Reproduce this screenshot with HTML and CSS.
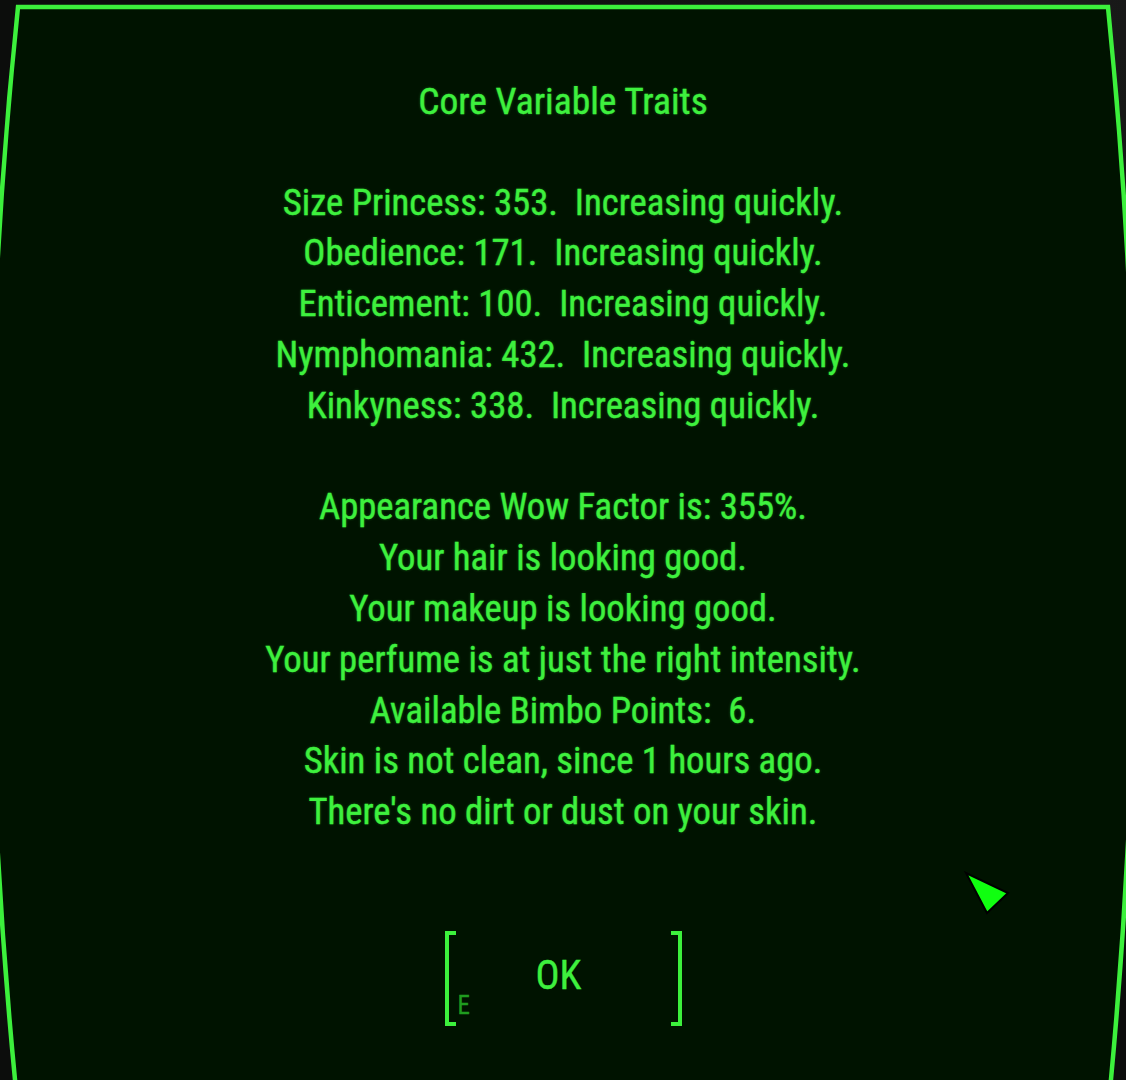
FILE: index.html
```html
<!DOCTYPE html>
<html lang="en">
<head>
<meta charset="utf-8">
<title>Core Variable Traits</title>
<link rel="stylesheet" href="styles.css">
</head>
<body>
<div class="screen">
  <svg class="frame" width="1126" height="1080" viewBox="0 0 1126 1080" aria-hidden="true">
    <path d="M18,7 L1108,7 Q1162,540 1110,1090 L16,1090 Q-38,540 18,7 Z" fill="#001300" stroke="#3cf03c" stroke-width="4.5" stroke-linejoin="miter"/>
  </svg>
  <main class="content">
    <div class="message">
      <p class="line title">Core Variable Traits</p>
      <p class="line blank">&nbsp;</p>
      <p class="line">Size Princess: 353.&nbsp; Increasing quickly.</p>
      <p class="line">Obedience: 171.&nbsp; Increasing quickly.</p>
      <p class="line">Enticement: 100.&nbsp; Increasing quickly.</p>
      <p class="line">Nymphomania: 432.&nbsp; Increasing quickly.</p>
      <p class="line">Kinkyness: 338.&nbsp; Increasing quickly.</p>
      <p class="line blank">&nbsp;</p>
      <p class="line">Appearance Wow Factor is: 355%.</p>
      <p class="line">Your hair is looking good.</p>
      <p class="line">Your makeup is looking good.</p>
      <p class="line">Your perfume is at just the right intensity.</p>
      <p class="line">Available Bimbo Points:&nbsp; 6.</p>
      <p class="line">Skin is not clean, since 1 hours ago.</p>
      <p class="line">There's no dirt or dust on your skin.</p>
    </div>
    <button class="ok-btn" type="button">
      <span class="ok-label">OK</span>
      <span class="ok-key">E</span>
    </button>
  </main>
  <svg class="cursor" width="50" height="48" viewBox="0 0 50 48" aria-hidden="true">
    <polygon points="4,3 46,23 25,43" fill="#10ff10" stroke="#000" stroke-width="2" stroke-linejoin="miter"/>
  </svg>
</div>
</body>
</html>
```

FILE: styles.css
```css
html, body {
  margin: 0;
  padding: 0;
}

body {
  background: #0c0d0c;
  width: 1126px;
  height: 1080px;
  overflow: hidden;
}

.screen {
  position: relative;
  width: 1126px;
  height: 1080px;
  overflow: hidden;
  background: radial-gradient(ellipse at 90% 0%, #1b1c1b 0%, #0c0d0c 40%);
}

.frame {
  position: absolute;
  left: 0;
  top: 0;
}

.content {
  position: relative;
  display: flex;
  flex-direction: column;
  align-items: center;
  padding-top: 76px;
  font-family: "Roboto Condensed", "Roboto", "Liberation Sans", sans-serif;
  font-stretch: condensed;
  color: #3ef03e;
  -webkit-text-stroke: 0.35px #3ef03e;
  text-shadow: 0 0 3px rgba(60, 240, 60, 0.35);
}

.message {
  text-align: center;
  font-size: 36.7px;
  line-height: 50.8px;
}

.line {
  margin: 0;
  white-space: pre;
}

.title {
  font-size: 37.5px;
}

.ok-btn {
  position: relative;
  margin-top: 93px;
  width: 237px;
  height: 95px;
  padding: 0 9px 4px 0;
  border: 0;
  background: transparent;
  font: inherit;
  color: inherit;
  display: flex;
  align-items: center;
  justify-content: center;
}

.ok-btn::before,
.ok-btn::after {
  content: "";
  position: absolute;
  top: 0;
  bottom: 0;
  width: 7px;
  border-top: 4px solid #3cf03c;
  border-bottom: 4px solid #3cf03c;
}

.ok-btn::before {
  left: 0;
  border-left: 4px solid #3cf03c;
}

.ok-btn::after {
  right: 0;
  border-right: 4px solid #3cf03c;
}

.ok-label {
  font-size: 40px;
  line-height: 40px;
}

.ok-key {
  position: absolute;
  left: 13px;
  bottom: 8px;
  font-size: 25px;
  line-height: 25px;
  color: #1f9c1f;
  -webkit-text-stroke: 0.3px #1f9c1f;
  text-shadow: none;
}

.cursor {
  position: absolute;
  left: 962px;
  top: 870px;
}
```
